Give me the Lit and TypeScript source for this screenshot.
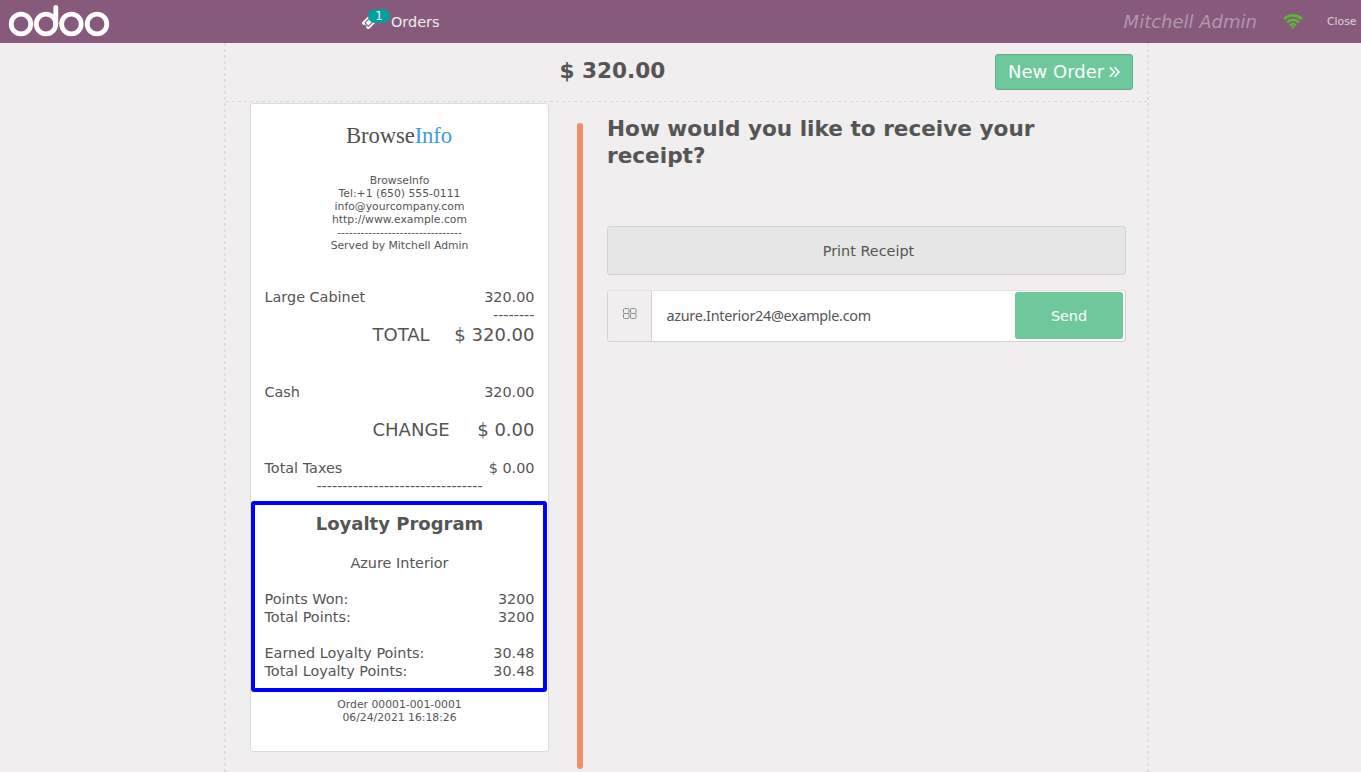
import { LitElement, html, css, svg } from "lit";
import { customElement, property } from "lit/decorators.js";

@customElement("receipt-line")
class ReceiptLine extends LitElement {
  @property() label = "";
  @property() value = "";
  static styles = css`
    :host { display: flex; justify-content: space-between; height: 18px; line-height: 18px; white-space: nowrap; }
    :host([emphasis]) { height: 22px; line-height: 22px; font-size: 18px; padding-left: 108px; }
  `;
  render() {
    return html`<span>${this.label}</span><span>${this.value}</span>`;
  }
}

@customElement("pos-header")
class PosHeader extends LitElement {
  static styles = css`
    :host { display: flex; height: 43px; flex: none; align-items: center; background: #875a7b; color: #eee; box-sizing: border-box; }
    svg { display: block; flex: none; }
    .brand { width: 361px; }
    .logo { margin-left: 8px; }
    .orders { display: flex; align-items: center; position: relative; font-size: 14.4px; flex: 1; }
    .ticket { margin: 0 14px 0 1px; }
    .badge { position: absolute; left: 7px; top: -5px; width: 22px; height: 14px; line-height: 14px; border-radius: 7px; background: #00a09d; color: #fff; font-size: 11.5px; text-align: center; }
    .user { font-size: 18px; font-style: italic; color: #b497ac; margin-right: 26px; }
    .wifi { margin-right: 24px; }
    .close { font-size: 10.8px; color: #ddd0d9; padding-right: 4.600px; }
  `;
  render() {
    return html`
      <div class="brand">
        <svg class="logo" width="102" height="43" viewBox="0 0 102 43" fill="none" stroke="#fff" stroke-width="4.8">
          ${[13, 38, 63.4, 89].map((x) => svg`<circle cx=${x} cy="24" r="9.8" />`)}
          <path d="M47.8 24V7.3" stroke-linecap="round" />
        </svg>
      </div>
      <div class="orders">
        <svg class="ticket" width="15" height="15" viewBox="0 0 15 15">
          <g transform="rotate(-45 7.2 8)">
            <path fill="#fff" fill-rule="evenodd" d="M1 3.200h12.500v3.100a1.700 1.700 0 0 0 0 3.400v3.100H1V9.700a1.700 1.700 0 0 0 0-3.400zM3.200 5v6h8V5z"/>
            <rect x="4.300" y="6.100" width="5.800" height="3.800" fill="#fff"/>
          </g>
        </svg>
        <span>Orders</span>
        <span class="badge">1</span>
      </div>
      <span class="user">Mitchell Admin</span>
      <svg class="wifi" width="20" height="15" viewBox="0 0 20 15" fill="none" stroke="#5bb82f" stroke-width="2.700">
        <path d="M1 5.100C6 .1 14 .1 19 5.100M4 8.400c3.500-3.300 8.500-3.300 12 0M7 11.500c1.800-1.600 4.200-1.600 6 0"/>
        <path d="M8.200 12.900q1.800-1.400 3.600 0L10 14.900z" fill="#5bb82f" stroke="none"/>
      </svg>
      <span class="close">Close</span>
    `;
  }
}

@customElement("pos-receipt")
class PosReceipt extends LitElement {
  static styles = css`
    :host { display: block; box-sizing: border-box; width: 299px; height: 649px; background: #fff; border: 1px solid #dcdcdc; border-radius: 3px; font-size: 14.4px; flex: none; }
    .logo { font: 22.7px/28px "Liberation Serif", serif; text-align: center; padding: 18px 1px 0 0; height: 52px; letter-spacing: -0.1px; color: #4f4f4f; }
    .logo span { color: #3b9de0; }
    .contact, .order { font-size: 10.8px; line-height: 13px; text-align: center; white-space: nowrap; }
    .lines { padding: 36px 13.500px 0; }
    .total { margin-bottom: 37px; }
    .change { margin: 18px 0; }
    .dashes { height: 18px; line-height: 18px; text-align: center; }
    .dashes.short { text-align: right; }
    .loyalty { box-sizing: border-box; width: 296px; height: 191px; margin-top: 6px; padding: 8px 8.500px 0 9.500px; border: 4px solid #00f; border-radius: 3px; }
    h3 { margin: 0 0 19px; font-size: 18px; line-height: 22px; text-align: center; }
    .customer { line-height: 18px; text-align: center; margin-bottom: 18px; }
    .gap { margin-bottom: 18px; }
    .order { padding-top: 6px; }
  `;
  render() {
    return html`
      <div class="logo">Browse<span>Info</span></div>
      <div class="contact">
        <div>BrowseInfo</div>
        <div>Tel:+1 (650) 555-0111</div>
        <div>info@yourcompany.com</div>
        <div>http://www.example.com</div>
        <div>${"-".repeat(32)}</div>
        <div>Served by Mitchell Admin</div>
      </div>
      <div class="lines">
        <receipt-line label="Large Cabinet" value="320.00"></receipt-line>
        <div class="dashes short">${"-".repeat(8)}</div>
        <receipt-line class="total" emphasis label="TOTAL" value="$ 320.00"></receipt-line>
        <receipt-line label="Cash" value="320.00"></receipt-line>
        <receipt-line class="change" emphasis label="CHANGE" value="$ 0.00"></receipt-line>
        <receipt-line label="Total Taxes" value="$ 0.00"></receipt-line>
        <div class="dashes">${"-".repeat(32)}</div>
      </div>
      <div class="loyalty">
        <h3>Loyalty Program</h3>
        <div class="customer">Azure Interior</div>
        <receipt-line label="Points Won:" value="3200"></receipt-line>
        <receipt-line class="gap" label="Total Points:" value="3200"></receipt-line>
        <receipt-line label="Earned Loyalty Points:" value="30.48"></receipt-line>
        <receipt-line label="Total Loyalty Points:" value="30.48"></receipt-line>
      </div>
      <div class="order">
        <div>Order 00001-001-0001</div>
        <div>06/24/2021 16:18:26</div>
      </div>
    `;
  }
}

@customElement("app-root")
class AppRoot extends LitElement {
  static styles = css`
    :host { display: flex; flex-direction: column; width: 100%; height: 772px; overflow: hidden; background: #f0eeee; color: #555; font-family: "DejaVu Sans", sans-serif; }
    .screen {
      flex: 1; min-height: 0; box-sizing: border-box; width: 925px; margin-left: 224px; padding: 0 2px; display: flex; flex-direction: column;
      background:
        repeating-linear-gradient(to bottom, #dfdddd 0 3px, transparent 3px 6px) left / 2px 100% no-repeat,
        repeating-linear-gradient(to bottom, #dfdddd 0 3px, transparent 3px 6px) right / 2px 100% no-repeat;
    }
    .top {
      box-sizing: border-box; height: 59px; flex: none; display: flex; justify-content: space-between; padding: 11px 14px 0 333.400px;
      background: repeating-linear-gradient(to right, #d9d7d7 0 3px, transparent 3px 6px) bottom / 100% 1px no-repeat;
    }
    .amount { font-size: 21.600px; line-height: 27px; font-weight: bold; margin-top: 3px; }
    .next { box-sizing: border-box; width: 138px; height: 36px; display: flex; align-items: center; padding: 0 0 1px 12px; gap: 5px; background: #6ec89b; border: 1px solid #64af8a; border-radius: 3px; color: #fff; font-size: 18px; white-space: nowrap; }
    .next svg { margin-top: 1px; }
    .content { display: flex; align-items: flex-start; padding: 1px 0 0 24px; }
    .bar { width: 6px; height: 646px; margin: 20px 24px 0 28px; border-radius: 3px; background: #ef8f69; flex: none; }
    .actions { width: 519px; flex: none; padding-top: 12px; }
    h1 { margin: 0 0 57px; font-size: 21.600px; line-height: 27px; width: 460px; }
    .print { box-sizing: border-box; height: 49px; border: 1px solid #d2d2d2; border-radius: 3px; background: #e6e6e6; font-size: 14.400px; line-height: 48px; text-align: center; padding-left: 4px; margin-bottom: 15px; }
    .email { box-sizing: border-box; height: 52px; display: flex; border: 1px solid #d2d2d2; border-top-color: #e4e2e2; border-radius: 3px; background: #fff; }
    .icon { width: 43px; border-right: 1px solid #d2d2d2; background: #f0eeee; border-radius: 2px 0 0 2px; display: flex; justify-content: center; padding-top: 17px; height: 33px; }
    .address { flex: 1; padding-left: 14.500px; font: 14.400px/49px "Noto Sans", sans-serif; letter-spacing: -0.3px; }
    .send { width: 108px; height: 47px; margin: 1px 2px 0 0; border-radius: 3px; background: #6ec89b; color: #fff; text-align: center; font-size: 14.400px; line-height: 48px; }
  `;
  render() {
    return html`
      <pos-header></pos-header>
      <main class="screen">
        <div class="top">
          <div class="amount">$ 320.00</div>
          <div class="next">
            New Order
            <svg width="11" height="12" viewBox="0 0 11 12" fill="none" stroke="#fff" stroke-width="1.7">
              <path d="M.9 1.200 5.300 6 .9 10.800M5.500 1.200 9.900 6l-4.400 4.800" />
            </svg>
          </div>
        </div>
        <div class="content">
          <pos-receipt></pos-receipt>
          <div class="bar"></div>
          <div class="actions">
            <h1>How would you like to receive your receipt?</h1>
            <div class="print">Print Receipt</div>
            <div class="email">
              <div class="icon">
                <svg width="14" height="12" viewBox="0 0 14 12" fill="none" stroke="#8c8c8c">
                  <rect x=".5" y=".5" width="5.500" height="5" rx="1.200"/>
                  <rect x=".5" y="5.500" width="5.500" height="5" rx="1.200"/>
                  <rect x="7.500" y=".5" width="5.500" height="5" rx="1.200"/>
                  <rect x="7.500" y="5.500" width="5.500" height="5" rx="1.200"/>
                </svg>
              </div>
              <div class="address">azure.Interior24@example.com</div>
              <div class="send">Send</div>
            </div>
          </div>
        </div>
      </main>
    `;
  }
}
